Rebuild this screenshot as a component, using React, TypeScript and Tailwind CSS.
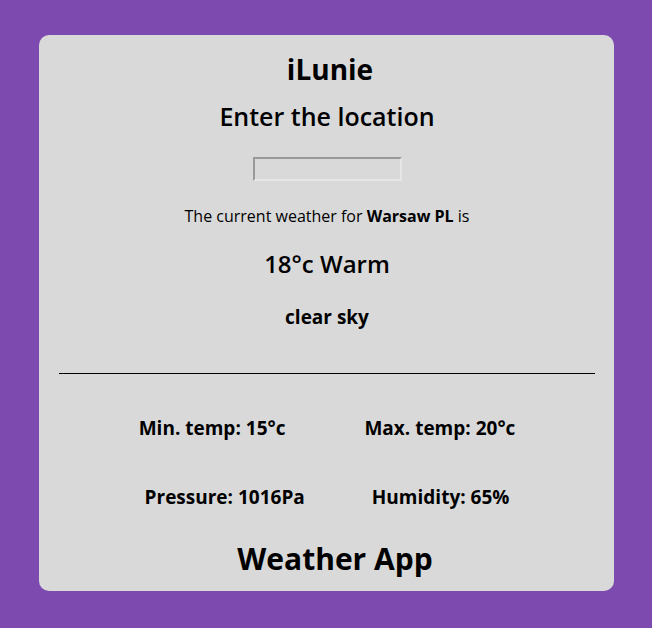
const Stat = ({ label, value }: { label: string; value: string }) => (
  <span className="font-bold text-[19px]">
    {label}: {value}
  </span>
)

export default function App() {
  return (
    <div className="min-h-[628px] w-full bg-[#7d4aaf] pt-[35px] pl-[39px] pr-[38px] pb-[37px] font-['Open_Sans',sans-serif] text-black">
      <div className="bg-[#d9d9d9] rounded-[10px] h-[556px] flex flex-col items-center pl-5 pr-[19px]">
        <h1 className="mt-[20px] ml-[6px] text-[28px] font-bold leading-none">iLunie</h1>
        <h2 className="mt-[21px] text-[25px] font-semibold leading-none">Enter the location</h2>
        <input
          type="text"
          className="mt-[28px] w-[149px] h-[24px] bg-transparent border-2 border-t-[#999] border-l-[#999] border-b-[#e6e6e6] border-r-[#e6e6e6] outline-none"
        />
        <p className="mt-[27px] text-[16px] leading-none">
          The current weather for <b>Warsaw PL</b> is
        </p>
        <p className="mt-[28px] text-[24px] font-semibold leading-none">18°c Warm</p>
        <p className="mt-[32px] text-[19px] font-bold leading-none">clear sky</p>
        <hr className="mt-[46px] w-full border-t border-black" />
        <div className="mt-[45px] flex justify-center gap-[79px] leading-none">
          <Stat label="Min. temp" value="15°c" />
          <Stat label="Max. temp" value="20°c" />
        </div>
        <div className="mt-[50px] flex justify-center gap-[67px] leading-none">
          <Stat label="Pressure" value="1016Pa" />
          <Stat label="Humidity" value="65%" />
        </div>
        <h2 className="mt-[37px] ml-[16px] text-[30px] font-bold leading-none">Weather App</h2>
      </div>
    </div>
  )
}
